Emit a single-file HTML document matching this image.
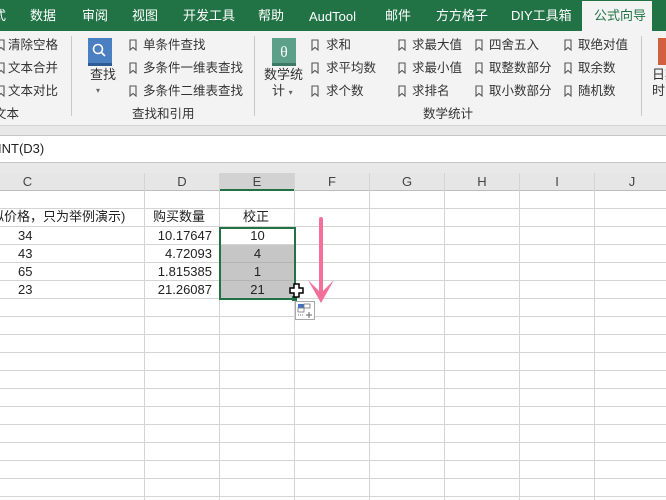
<!DOCTYPE html>
<html><head><meta charset="utf-8">
<style>
*{margin:0;padding:0;box-sizing:border-box}
body{width:666px;height:500px;overflow:hidden;position:relative;background:#fff;font-family:"Liberation Sans","Noto Sans CJK SC",sans-serif;color:#262626}
.a{position:absolute;white-space:nowrap}
#tabs{left:0;top:0;width:666px;height:31px;background:#217346}
.t{position:absolute;top:7px;height:18px;line-height:18px;color:#fff;font-size:13px}
#rib{left:0;top:31px;width:666px;height:94px;background:#f3f3f3}
.r{position:absolute;font-size:12.5px;line-height:16px;color:#333}
.bm{position:absolute;width:8px;height:12px}
.sep{position:absolute;top:40px;width:1px;height:80px;background:#c8c8c8}
.hdr{position:absolute;top:173px;height:18px;font-size:13px;text-align:center;color:#444;line-height:18px}
.c{position:absolute;font-size:13px;line-height:18px;color:#222}
</style></head><body>
<div class="a" id="tabs">
<span class="t" style="left:-7px">式</span>
<span class="t" style="left:30px">数据</span>
<span class="t" style="left:82px">审阅</span>
<span class="t" style="left:132px">视图</span>
<span class="t" style="left:183px">开发工具</span>
<span class="t" style="left:258px">帮助</span>
<span class="t" style="left:309px;top:8px">AudTool</span>
<span class="t" style="left:385px">邮件</span>
<span class="t" style="left:436px">方方格子</span>
<span class="t" style="left:511px">DIY工具箱</span>
<div style="position:absolute;left:582px;top:1px;width:70px;height:31px;background:#f3f3f3"></div>
<span class="t" style="left:594px;color:#217346">公式向导</span>
</div>
<div class="a" id="rib">
<svg width="0" height="0" style="position:absolute"><defs><symbol id="b" viewBox="0 0 8 12"><path d="M1 1h6v10l-3-2.5L1 11z" fill="none" stroke="#555" stroke-width="1.1"/></symbol></defs></svg>
<svg class="bm" style="left:-3px;top:8px"><use href="#b"/></svg><span class="r" style="left:8px;top:6px">清除空格</span>
<svg class="bm" style="left:-3px;top:31px"><use href="#b"/></svg><span class="r" style="left:8px;top:29px">文本合并</span>
<svg class="bm" style="left:-3px;top:54px"><use href="#b"/></svg><span class="r" style="left:8px;top:52px">文本对比</span>
<span class="r" style="left:-6px;top:75px">文本</span>
<div class="sep" style="left:71px;top:5px"></div>
<svg class="a" style="left:88px;top:7px" width="25" height="30"><rect x="0" y="0" width="24" height="27" fill="#4a7fc1"/><rect x="0" y="25" width="24" height="3" fill="#2d5c94"/><circle cx="10" cy="11" r="4.5" fill="none" stroke="#fff" stroke-width="1.6"/><path d="M13 14l4 4" stroke="#fff" stroke-width="1.8"/></svg>
<span class="r" style="left:90px;top:36px;font-size:13px">查找</span>
<span class="r" style="left:96px;top:52px;font-size:8px;color:#666">▾</span>
<svg class="bm" style="left:129px;top:8px"><use href="#b"/></svg><span class="r" style="left:143px;top:6px">单条件查找</span>
<svg class="bm" style="left:129px;top:31px"><use href="#b"/></svg><span class="r" style="left:143px;top:29px">多条件一维表查找</span>
<svg class="bm" style="left:129px;top:54px"><use href="#b"/></svg><span class="r" style="left:143px;top:52px">多条件二维表查找</span>
<span class="r" style="left:132px;top:75px">查找和引用</span>
<div class="sep" style="left:254px;top:5px"></div>
<svg class="a" style="left:272px;top:7px" width="25" height="30"><rect x="0" y="0" width="24" height="27" fill="#5da08a"/><rect x="0" y="25" width="24" height="3" fill="#3d7a66"/><text x="12" y="19" font-size="16" fill="#fff" text-anchor="middle" font-family="Liberation Serif,serif">θ</text></svg>
<span class="r" style="left:264px;top:36px;font-size:13px">数学统</span>
<span class="r" style="left:272px;top:52px;font-size:13px">计 <span style="font-size:8px;color:#666">▾</span></span>
<svg class="bm" style="left:311px;top:8px"><use href="#b"/></svg><span class="r" style="left:326px;top:6px">求和</span>
<svg class="bm" style="left:311px;top:31px"><use href="#b"/></svg><span class="r" style="left:326px;top:29px">求平均数</span>
<svg class="bm" style="left:311px;top:54px"><use href="#b"/></svg><span class="r" style="left:326px;top:52px">求个数</span>
<svg class="bm" style="left:398px;top:8px"><use href="#b"/></svg><span class="r" style="left:412px;top:6px">求最大值</span>
<svg class="bm" style="left:398px;top:31px"><use href="#b"/></svg><span class="r" style="left:412px;top:29px">求最小值</span>
<svg class="bm" style="left:398px;top:54px"><use href="#b"/></svg><span class="r" style="left:412px;top:52px">求排名</span>
<svg class="bm" style="left:475px;top:8px"><use href="#b"/></svg><span class="r" style="left:489px;top:6px">四舍五入</span>
<svg class="bm" style="left:475px;top:31px"><use href="#b"/></svg><span class="r" style="left:489px;top:29px">取整数部分</span>
<svg class="bm" style="left:475px;top:54px"><use href="#b"/></svg><span class="r" style="left:489px;top:52px">取小数部分</span>
<svg class="bm" style="left:564px;top:8px"><use href="#b"/></svg><span class="r" style="left:578px;top:6px">取绝对值</span>
<svg class="bm" style="left:564px;top:31px"><use href="#b"/></svg><span class="r" style="left:578px;top:29px">取余数</span>
<svg class="bm" style="left:564px;top:54px"><use href="#b"/></svg><span class="r" style="left:578px;top:52px">随机数</span>
<span class="r" style="left:423px;top:75px">数学统计</span>
<div class="sep" style="left:641px;top:5px"></div>
<div class="a" style="left:658px;top:7px;width:12px;height:27px;background:#d0603f"></div>
<span class="r" style="left:652px;top:36px;font-size:13px">日期</span>
<span class="r" style="left:652px;top:52px;font-size:13px">时间</span>
</div>
<div class="a" style="left:0;top:125px;width:666px;height:11px;background:#e8e8e8;border-top:1px solid #d4d4d4;border-bottom:1px solid #c6c6c6"></div>
<div class="a" style="left:0;top:136px;width:666px;height:26px;background:#fff"></div>
<span class="c" style="left:-2px;top:140px;font-size:13px">INT(D3)</span>
<div class="a" style="left:0;top:162px;width:666px;height:11px;background:#e8e8e8;border-top:1px solid #c6c6c6"></div>
<div class="a" style="left:0;top:173px;width:666px;height:18px;background:#e6e6e6;border-bottom:1px solid #bdbdbd"></div>
<div class="a" style="left:219px;top:173px;width:76px;height:18px;background:#d2d2d2;border-bottom:2px solid #217346"></div>
<div class="a" style="left:0;top:191px;width:666px;height:309px;background-image:repeating-linear-gradient(to bottom,transparent 0 17px,#d4d4d4 17px 18px)"></div>
<div class="a" style="left:144px;top:173px;width:1px;height:327px;background:#d4d4d4"></div>
<div class="a" style="left:219px;top:173px;width:1px;height:327px;background:#d4d4d4"></div>
<div class="a" style="left:294px;top:173px;width:1px;height:327px;background:#d4d4d4"></div>
<div class="a" style="left:369px;top:173px;width:1px;height:327px;background:#d4d4d4"></div>
<div class="a" style="left:444px;top:173px;width:1px;height:327px;background:#d4d4d4"></div>
<div class="a" style="left:519px;top:173px;width:1px;height:327px;background:#d4d4d4"></div>
<div class="a" style="left:594px;top:173px;width:1px;height:327px;background:#d4d4d4"></div>
<div class="hdr" style="left:0;width:55px">C</div>
<div class="hdr" style="left:145px;width:74px">D</div>
<div class="hdr" style="left:220px;width:74px">E</div>
<div class="hdr" style="left:295px;width:74px">F</div>
<div class="hdr" style="left:370px;width:74px">G</div>
<div class="hdr" style="left:445px;width:74px">H</div>
<div class="hdr" style="left:520px;width:74px">I</div>
<div class="hdr" style="left:595px;width:74px">J</div>
<div class="a" style="left:220px;top:245px;width:75px;height:54px;background:#c6c6c6;background-image:repeating-linear-gradient(to bottom,transparent 0 17px,#b4b4b4 17px 18px)"></div>
<div class="a" style="left:219px;top:227px;width:77px;height:73px;border:2px solid #217346"></div>
<div class="a" style="left:292px;top:296px;width:5px;height:5px;background:#217346"></div>
<span class="c" style="left:-9px;top:208px">拟价格，只为举例演示)</span>
<span class="c" style="left:153px;top:208px">购买数量</span>
<span class="c" style="left:243px;top:208px">校正</span>
<span class="c" style="left:18px;top:227px">34</span>
<span class="c" style="left:18px;top:245px">43</span>
<span class="c" style="left:18px;top:263px">65</span>
<span class="c" style="left:18px;top:281px">23</span>
<span class="c" style="left:145px;width:67px;text-align:right;top:227px">10.17647</span>
<span class="c" style="left:145px;width:67px;text-align:right;top:245px">4.72093</span>
<span class="c" style="left:145px;width:67px;text-align:right;top:263px">1.815385</span>
<span class="c" style="left:145px;width:67px;text-align:right;top:281px">21.26087</span>
<span class="c" style="left:220px;width:75px;text-align:center;top:227px">10</span>
<span class="c" style="left:220px;width:75px;text-align:center;top:245px">4</span>
<span class="c" style="left:220px;width:75px;text-align:center;top:263px">1</span>
<span class="c" style="left:220px;width:75px;text-align:center;top:281px">21</span>
<svg class="a" style="left:300px;top:215px" width="40" height="95"><path d="M21 4V78" stroke="#f2709a" stroke-width="4" stroke-linecap="round"/><path d="M8 65L21 88L34 65L21 78Z" fill="#f2709a"/></svg>
<svg class="a" style="left:289px;top:283px" width="16" height="16"><path d="M5 1h5v4h4v5h-4v4H5v-4H1V5h4z" fill="#fff" stroke="#000" stroke-width="1.5"/></svg>
<svg class="a" style="left:295px;top:301px" width="21" height="20"><rect x="0.5" y="0.5" width="19" height="18" fill="#fff" stroke="#a8a8a8"/><rect x="3" y="3" width="6" height="4" fill="#4472c4"/><rect x="9" y="3" width="6" height="4" fill="none" stroke="#777" stroke-width=".8"/><rect x="3" y="7" width="6" height="4" fill="none" stroke="#777" stroke-width=".8"/><path d="M3 14h6" stroke="#777" stroke-dasharray="1 1"/><path d="M14 11v6M11 14h6" stroke="#666"/></svg>
</body></html>
